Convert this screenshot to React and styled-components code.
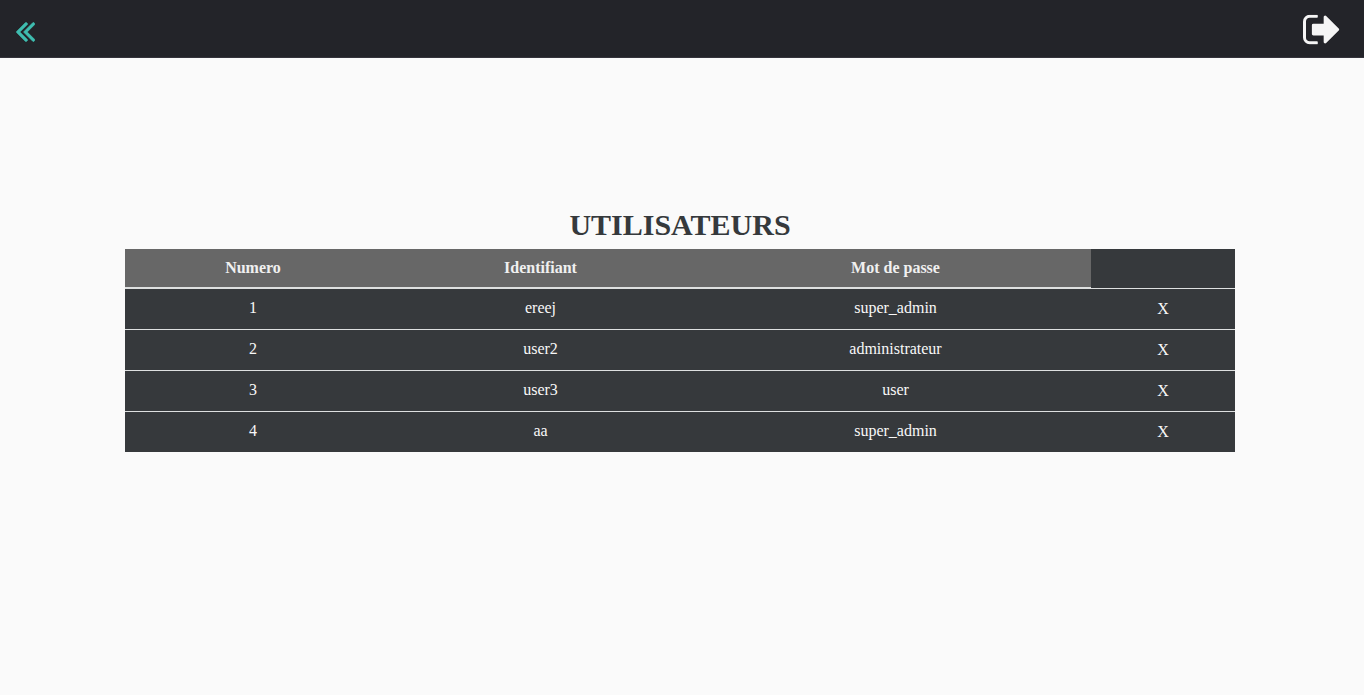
import React from 'react';
import styled, { createGlobalStyle } from 'styled-components';

const GlobalStyle = createGlobalStyle`
  body {
    margin: 0;
    background: #fafafa;
    font-family: "Liberation Serif", "Times New Roman", serif;
    font-size: 16px;
    line-height: 18px;
  }
`;

const TopBar = styled.header`
  box-sizing: border-box;
  height: 58px;
  padding: 5px 24.5px 0 15.8px;
  display: flex;
  align-items: center;
  justify-content: space-between;
  background: #232429;
  border-bottom: 1px solid #35343c;
`;

const IconButton = styled.button`
  display: flex;
  padding: 0;
  border: 0;
  background: none;
  color: ${(p) => p.$color};
  transform: translateY(${(p) => p.$shift || 0}px);
  cursor: pointer;

  svg {
    display: block;
    fill: currentColor;
  }
`;

const Main = styled.main`
  width: 1110px;
  margin: 0 auto 0 125px;
  padding-top: 149px;
`;

const Title = styled.h1`
  margin: 0;
  height: 42px;
  font-size: 30px;
  line-height: 36px;
  font-weight: 700;
  text-align: center;
  color: #35393c;
`;

const Table = styled.table`
  width: 1110px;
  table-layout: fixed;
  border-collapse: separate;
  border-spacing: 0;
  background: #36393c;
  color: #f8f8f8;
  text-align: center;
`;

const Column = styled.col`
  width: ${(p) => p.$width}px;
`;

const HeadCell = styled.th`
  box-sizing: border-box;
  height: 40px;
  padding: 0;
  background: #676767;
  border-bottom: 2px solid #dee0e0;
  color: #f0f0f0;
`;

const EmptyHeadCell = styled.td`
  padding: 0;
  border-bottom: 1px solid #dee0e0;
`;

const Cell = styled.td`
  box-sizing: border-box;
  height: ${(p) => (p.$last ? 40 : 41)}px;
  padding: 0 0 3px;
  border-bottom: ${(p) => (p.$last ? '0' : '1px solid #dee0e0')};
`;

const DeleteButton = styled.button`
  display: block;
  margin: 0 auto;
  padding: 3px 0 0;
  border: 0;
  background: none;
  color: inherit;
  font: inherit;
  cursor: pointer;
`;

const users = [
  { id: 1, login: 'ereej', role: 'super_admin' },
  { id: 2, login: 'user2', role: 'administrateur' },
  { id: 3, login: 'user3', role: 'user' },
  { id: 4, login: 'aa', role: 'super_admin' },
];

const BackIcon = () => (
  <svg
    width="19.4"
    height="20"
    viewBox="409 441 1006 1038"
    stroke="currentColor"
    strokeWidth="36"
    strokeLinejoin="round"
  >
    <path d="M1011 1376q0 13-10 23l-50 50q-10 10-23 10t-23-10l-466-466q-10-10-10-23t10-23l466-466q10-10 23-10t23 10l50 50q10 10 10 23t-10 23l-393 393 393 393q10 10 10 23zm384 0q0 13-10 23l-50 50q-10 10-23 10t-23-10l-466-466q-10-10-10-23t10-23l466-466q10-10 23-10t23 10l50 50q10 10 10 23t-10 23l-393 393 393 393q10 10 10 23z" />
  </svg>
);

const SignOutIcon = () => (
  <svg width="36.2" height="29.5" viewBox="64 256 1568 1280">
    <path d="M704 1440q0 4 1 20t.5 26.5-3 23.5-10 19.5-20.5 6.5h-320q-119 0-203.5-84.5t-84.5-203.5v-704q0-119 84.5-203.5t203.5-84.5h320q13 0 22.5 9.5t9.5 22.5q0 4 1 20t.5 26.5-3 23.5-10 19.5-20.5 6.5h-320q-66 0-113 47t-47 113v704q0 66 47 113t113 47h312l11.5 1 11.5 3 8 5.5 7 9 2 13.5zm928-544q0 26-19 45l-544 544q-19 19-45 19t-45-19-19-45v-288h-448q-26 0-45-19t-19-45v-384q0-26 19-45t45-19h448v-288q0-26 19-45t45-19 45 19l544 544q19 19 19 45z" />
  </svg>
);

export default function App() {
  return (
    <>
      <GlobalStyle />
      <TopBar>
        <IconButton $color="#3fbdb0" $shift={1} aria-label="Retour">
          <BackIcon />
        </IconButton>
        <IconButton $color="#f5f5f5" $shift={-1.2} aria-label="Déconnexion">
          <SignOutIcon />
        </IconButton>
      </TopBar>
      <Main>
        <Title>UTILISATEURS</Title>
        <Table>
          <colgroup>
            <Column $width={256} />
            <Column $width={319} />
            <Column $width={391} />
            <Column $width={144} />
          </colgroup>
          <thead>
            <tr>
              <HeadCell>Numero</HeadCell>
              <HeadCell>Identifiant</HeadCell>
              <HeadCell>Mot de passe</HeadCell>
              <EmptyHeadCell />
            </tr>
          </thead>
          <tbody>
            {users.map((user, i) => {
              const last = i === users.length - 1;
              return (
                <tr key={user.id}>
                  <Cell $last={last}>{user.id}</Cell>
                  <Cell $last={last}>{user.login}</Cell>
                  <Cell $last={last}>{user.role}</Cell>
                  <Cell $last={last}>
                    <DeleteButton>X</DeleteButton>
                  </Cell>
                </tr>
              );
            })}
          </tbody>
        </Table>
      </Main>
    </>
  );
}
